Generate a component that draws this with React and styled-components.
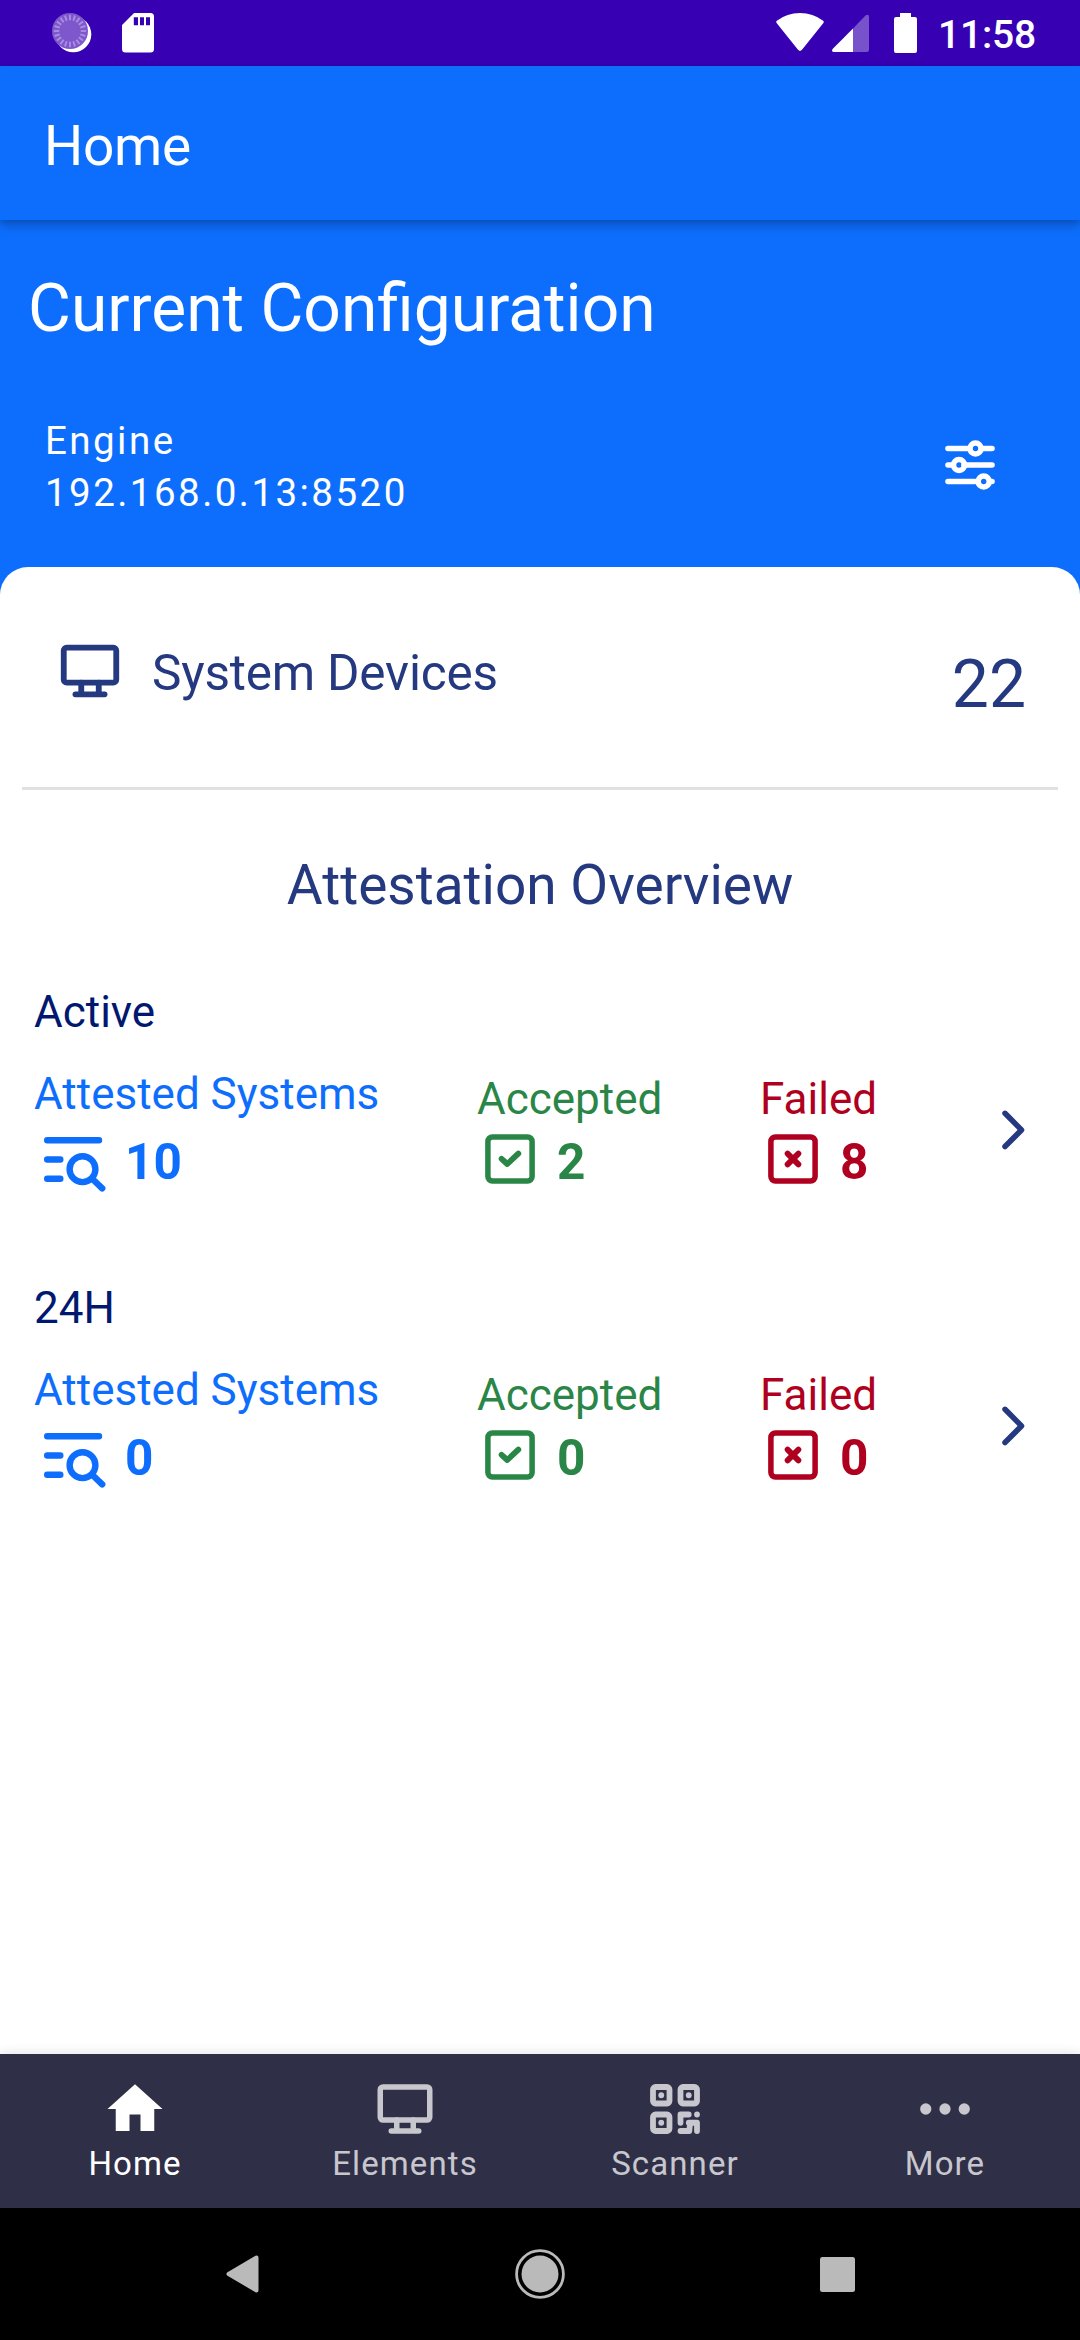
import React from "react";
import styled, { createGlobalStyle } from "styled-components";

const color = {
  status: "#3700b3",
  primary: "#0d6efd",
  navy: "#24397f",
  deep: "#001970",
  accepted: "#2a8647",
  failed: "#b00020",
  nav: "#2f3048",
  navIdle: "#c8c7ce",
  divider: "#e1e1e1",
  system: "#bababa",
};

const GlobalStyle = createGlobalStyle`
  body { margin: 0; background: #fff; }
  *, *::before, *::after { box-sizing: border-box; }
`;

const Screen = styled.div`
  display: flex;
  flex-direction: column;
  width: 1080px;
  height: 2340px;
  overflow: hidden;
  background: ${color.primary};
  font-family: Roboto, "Noto Sans", sans-serif;
`;

const Icon = styled.svg`
  display: block;
  flex: none;
  overflow: visible;
`;

const StatusBar = styled.header`
  display: flex;
  justify-content: space-between;
  flex: none;
  height: 66px;
  padding: 13px 44px 0 52px;
  background: ${color.status};
  color: #fff;
`;

const StatusGroup = styled.div`
  display: flex;
  align-items: flex-start;
  gap: ${(p) => p.$gap}px;
`;

const Clock = styled.span`
  margin-left: 13px;
  font-size: 39px;
  font-weight: 500;
  letter-spacing: -0.2px;
  line-height: 44px;
`;

const BatteryIcon = styled(Icon)`
  margin-left: 16px;
`;

const AppBar = styled.div`
  position: relative;
  z-index: 1;
  flex: none;
  height: 154px;
  padding: 48px 44px 0;
  background: ${color.primary};
  box-shadow: 0 6px 10px rgba(0, 0, 0, 0.22), 0 1px 5px rgba(0, 0, 0, 0.12);
`;

const AppTitle = styled.h1`
  margin: 0;
  color: #fff;
  font-size: 55px;
  font-weight: 400;
  letter-spacing: -0.3px;
  line-height: 64px;
`;

const ConfigPanel = styled.section`
  flex: none;
  height: 347px;
  padding-top: 50px;
  color: #fff;
`;

const ConfigTitle = styled.h2`
  margin: 0 28px;
  font-size: 65.9px;
  font-weight: 400;
  line-height: 78px;
`;

const ConfigRow = styled.div`
  display: flex;
  justify-content: space-between;
  align-items: flex-start;
  padding: 67px 77px 0 45px;
`;

const EngineText = styled.p`
  margin: 0;
  font-size: 38.5px;
  letter-spacing: 2.45px;
  line-height: 52px;
`;

const EngineSettings = styled.div`
  padding-top: 17px;
`;

const Card = styled.main`
  flex: 1;
  padding-top: 69px;
  border-radius: 28px 28px 0 0;
  background: #fff;
`;

const DevicesRow = styled.div`
  display: flex;
  align-items: flex-start;
  height: 151px;
  padding: 0 54px 0 55px;
  color: ${color.navy};
`;

const DevicesLabel = styled.span`
  flex: 1;
  padding: 8px 0 0 27px;
  font-size: 49.5px;
  letter-spacing: -0.2px;
  line-height: 58px;
`;

const DevicesCount = styled.span`
  padding-top: 10px;
  font-size: 66px;
  line-height: 78px;
`;

const Divider = styled.hr`
  height: 3px;
  margin: 0 22px;
  border: 0;
  background: ${color.divider};
`;

const OverviewTitle = styled.h2`
  margin: 63px 0 69px;
  color: ${color.navy};
  font-size: 55px;
  font-weight: 400;
  line-height: 64px;
  text-align: center;
`;

const Period = styled.section`
  height: 296px;
  padding: 0 34px;
`;

const PeriodName = styled.h3`
  margin: 0 0 30px;
  color: ${color.deep};
  font-size: 44px;
  font-weight: 400;
  line-height: 52px;
`;

const MetricGrid = styled.div`
  display: grid;
  grid-template-columns: 443px 283px 241px 1fr;
  align-items: start;
`;

const Metric = styled.div`
  padding-top: ${(p) => p.$drop || 0}px;
  color: ${(p) => p.$tone};
`;

const MetricLabel = styled.div`
  font-size: 44px;
  line-height: 52px;
`;

const MetricValue = styled.div`
  display: flex;
  align-items: flex-start;
  gap: ${(p) => p.$gap}px;
  padding: ${(p) => p.$pad};
  font-size: 49.5px;
  font-weight: 700;
  line-height: 58px;
`;

const MetricNumber = styled.span`
  margin-top: ${(p) => p.$drop || 0}px;
`;

const ChevronCell = styled.div`
  padding-top: 42px;
  color: ${color.navy};
`;

const BottomNav = styled.nav`
  position: relative;
  display: grid;
  grid-template-columns: repeat(4, 1fr);
  flex: none;
  height: 154px;
  background: ${color.nav};
  box-shadow: 0 0 12px rgba(0, 0, 0, 0.12);
`;

const NavItem = styled.div`
  display: flex;
  flex-direction: column;
  align-items: center;
  gap: 2px;
  padding-top: 22px;
  color: ${(p) => (p.$active ? "#fff" : color.navIdle)};
  font-size: 33px;
  letter-spacing: 1.1px;
  line-height: 39px;
`;

const SystemNav = styled.footer`
  display: grid;
  grid-template-columns: repeat(3, 297.5px);
  justify-content: center;
  align-items: center;
  justify-items: center;
  flex: none;
  height: 132px;
  background: #000;
  color: ${color.system};
`;

function SpinnerIcon() {
  const ticks = Array.from({ length: 20 }, (_, i) => i * 18);
  return (
    <Icon width="40" height="40" viewBox="0 0 40 40">
      <circle cx="21.3" cy="21.3" r="18" fill="#fff" />
      <circle cx="18" cy="18" r="18" fill="#7e57cd" />
      {ticks.map((a) => (
        <line key={a} x1="18" y1="1.8" x2="18" y2="7.2" stroke="#a98fdf" strokeWidth="1.9" transform={`rotate(${a} 18 18)`} />
      ))}
    </Icon>
  );
}

function SdCardIcon() {
  return (
    <Icon width="32" height="40" viewBox="0 0 32 40" fill="#fff">
      <path
        fillRule="evenodd"
        d="M12 0H28.5Q32 0 32 3.5V36Q32 39.5 28.5 39.5H3.5Q0 39.5 0 36V12ZM11.8 4.3V12.3H16V4.3ZM18 4.3V12.3H22V4.3ZM24 4.3V12.3H28V4.3Z"
      />
    </Icon>
  );
}

function WifiIcon() {
  return (
    <Icon width="48" height="40" viewBox="0 0 48 40" fill="#fff">
      <path d="M.6 10Q-.4 8.6 .8 7.8Q11 0 24 0T47.2 7.8Q48.4 8.6 47.4 10L26 36.800Q24 39 22 36.800Z" />
    </Icon>
  );
}

function SignalIcon() {
  return (
    <Icon width="38" height="40" viewBox="0 0 38 40" fill="#fff">
      <path opacity=".32" d="M21 15.5L33.5 2.6Q37 .3 37 4V36.5Q37 39 34.5 39H21Z" />
      <path d="M21 15.5V39H1.8Q-1 38.5 .6 36Z" />
    </Icon>
  );
}

function SlidersIcon() {
  return (
    <Icon width="66" height="66" viewBox="0 0 66 66" fill="none" stroke="currentColor" strokeWidth="5.6" strokeLinecap="round">
      <path d="M11 16.5H30M45 16.5H55M11 33H14M27 33H55M11 49.5H38M54 49.5H55" />
      <circle cx="38.5" cy="16.5" r="5.5" />
      <circle cx="22" cy="33" r="5.5" />
      <circle cx="46.7" cy="49.5" r="5.5" />
    </Icon>
  );
}

function DesktopIcon({ size = 66 }) {
  return (
    <Icon width={size} height={size} viewBox="0 0 24 24" fill="none" stroke="currentColor" strokeWidth="2" strokeLinecap="round">
      <rect x="3" y="4" width="18" height="12" rx="1" />
      <path d="M9 16V20M15 16V20M7 20H17" />
    </Icon>
  );
}

function ListSearchIcon() {
  return (
    <Icon width="62" height="56" viewBox="0 0 62 56" fill="none" stroke="currentColor" strokeWidth="6.4" strokeLinecap="round">
      <path d="M3.2 4.2H55M3.2 23.5H16.3M3.2 42.7H16.3M49.5 44L58.2 52.4" />
      <circle cx="38.5" cy="33.2" r="12.9" />
    </Icon>
  );
}

function BoxIcon({ mark }) {
  return (
    <Icon width="66" height="66" viewBox="0 0 66 66" fill="none" stroke="currentColor" strokeWidth="5.5" strokeLinecap="round" strokeLinejoin="round">
      <rect x="10.9" y="10.9" width="44.2" height="44.2" rx="4.5" />
      <path strokeWidth="5.8" d={mark} />
    </Icon>
  );
}

const CHECK = "M24.6 32.8L30.3 38L41.3 27.6";
const CROSS = "M27.6 27.6L38.4 38.4M38.4 27.6L27.6 38.4";

function ChevronIcon() {
  return (
    <Icon width="24" height="40" viewBox="0 0 24 40" fill="none" stroke="currentColor" strokeWidth="5.5" strokeLinecap="round" strokeLinejoin="round">
      <path d="M4 3.3L20.5 20L4 36.5" />
    </Icon>
  );
}

function HomeIcon() {
  return (
    <Icon width="66" height="66" viewBox="0 0 24 24" fill="currentColor">
      <path d="M10 20v-6h4v6h5v-8h3L12 3 2 12h3v8z" />
    </Icon>
  );
}

function QrIcon() {
  return (
    <Icon width="66" height="66" viewBox="0 0 24 24" fill="none" stroke="currentColor" strokeWidth="2.1" strokeLinecap="round" strokeLinejoin="round">
      <rect x="4" y="4" width="6" height="6" rx=".9" />
      <rect x="14" y="4" width="6" height="6" rx=".9" />
      <rect x="4" y="14" width="6" height="6" rx=".9" />
      <path d="M14 17V14H17M17 17H20V20M14 20H17.2L17.5 17" />
      <g fill="currentColor" stroke="none">
        <circle cx="7" cy="7" r="1.05" />
        <circle cx="17" cy="7" r="1.05" />
        <circle cx="7" cy="17" r="1.05" />
        <circle cx="20" cy="14" r="1.05" />
      </g>
    </Icon>
  );
}

function MoreIcon() {
  return (
    <Icon width="66" height="66" viewBox="0 0 24 24" fill="currentColor">
      <circle cx="5" cy="12" r="2.05" />
      <circle cx="12" cy="12" r="2.05" />
      <circle cx="19" cy="12" r="2.05" />
    </Icon>
  );
}

function PeriodBlock({ name, attested, accepted, failed }) {
  return (
    <Period>
      <PeriodName>{name}</PeriodName>
      <MetricGrid>
        <Metric $tone={color.primary}>
          <MetricLabel>Attested Systems</MetricLabel>
          <MetricValue $gap={19} $pad="16px 0 0 10px">
            <ListSearchIcon />
            <MetricNumber $drop={-3}>{attested}</MetricNumber>
          </MetricValue>
        </Metric>
        <Metric $tone={color.accepted} $drop={5}>
          <MetricLabel>Accepted</MetricLabel>
          <MetricValue $gap={14} $pad="1px 0 0">
            <BoxIcon mark={CHECK} />
            <MetricNumber $drop={7}>{accepted}</MetricNumber>
          </MetricValue>
        </Metric>
        <Metric $tone={color.failed} $drop={5}>
          <MetricLabel>Failed</MetricLabel>
          <MetricValue $gap={14} $pad="1px 0 0">
            <BoxIcon mark={CROSS} />
            <MetricNumber $drop={7}>{failed}</MetricNumber>
          </MetricValue>
        </Metric>
        <ChevronCell>
          <ChevronIcon />
        </ChevronCell>
      </MetricGrid>
    </Period>
  );
}

const navItems = [
  { label: "Home", glyph: HomeIcon, active: true },
  { label: "Elements", glyph: DesktopIcon },
  { label: "Scanner", glyph: QrIcon },
  { label: "More", glyph: MoreIcon },
];

export default function App() {
  return (
    <>
      <GlobalStyle />
      <Screen>
        <StatusBar>
          <StatusGroup $gap={30}>
            <SpinnerIcon />
            <SdCardIcon />
          </StatusGroup>
          <StatusGroup $gap={8}>
            <WifiIcon />
            <SignalIcon />
            <BatteryIcon width="23" height="40" viewBox="0 0 23 40" fill="#fff">
              <path d="M6 0H17V4H21Q23 4 23 6V38Q23 40 21 40H2Q0 40 0 38V6Q0 4 2 4H6Z" />
            </BatteryIcon>
            <Clock>11:58</Clock>
          </StatusGroup>
        </StatusBar>

        <AppBar>
          <AppTitle>Home</AppTitle>
        </AppBar>

        <ConfigPanel>
          <ConfigTitle>Current Configuration</ConfigTitle>
          <ConfigRow>
            <div>
              <EngineText>Engine</EngineText>
              <EngineText>192.168.0.13:8520</EngineText>
            </div>
            <EngineSettings>
              <SlidersIcon />
            </EngineSettings>
          </ConfigRow>
        </ConfigPanel>

        <Card>
          <DevicesRow>
            <DesktopIcon size={70} />
            <DevicesLabel>System Devices</DevicesLabel>
            <DevicesCount>22</DevicesCount>
          </DevicesRow>
          <Divider />
          <OverviewTitle>Attestation Overview</OverviewTitle>
          <PeriodBlock name="Active" attested={10} accepted={2} failed={8} />
          <PeriodBlock name="24H" attested={0} accepted={0} failed={0} />
        </Card>

        <BottomNav>
          {navItems.map(({ label, glyph: Glyph, active }) => (
            <NavItem key={label} $active={active}>
              <Glyph />
              {label}
            </NavItem>
          ))}
        </BottomNav>

        <SystemNav>
          <Icon width="33" height="38" viewBox="0 0 33 38" fill="currentColor" stroke="currentColor" strokeWidth="4" strokeLinejoin="round">
            <path d="M30.5 2.5V35.5L2.5 19Z" />
          </Icon>
          <Icon width="50" height="50" viewBox="0 0 50 50" fill="currentColor">
            <circle cx="25" cy="25" r="23.4" fill="none" stroke="currentColor" strokeWidth="2.8" />
            <circle cx="25" cy="25" r="18.5" />
          </Icon>
          <Icon width="35" height="35" viewBox="0 0 35 35" fill="currentColor">
            <rect width="35" height="35" rx="2.5" />
          </Icon>
        </SystemNav>
      </Screen>
    </>
  );
}
